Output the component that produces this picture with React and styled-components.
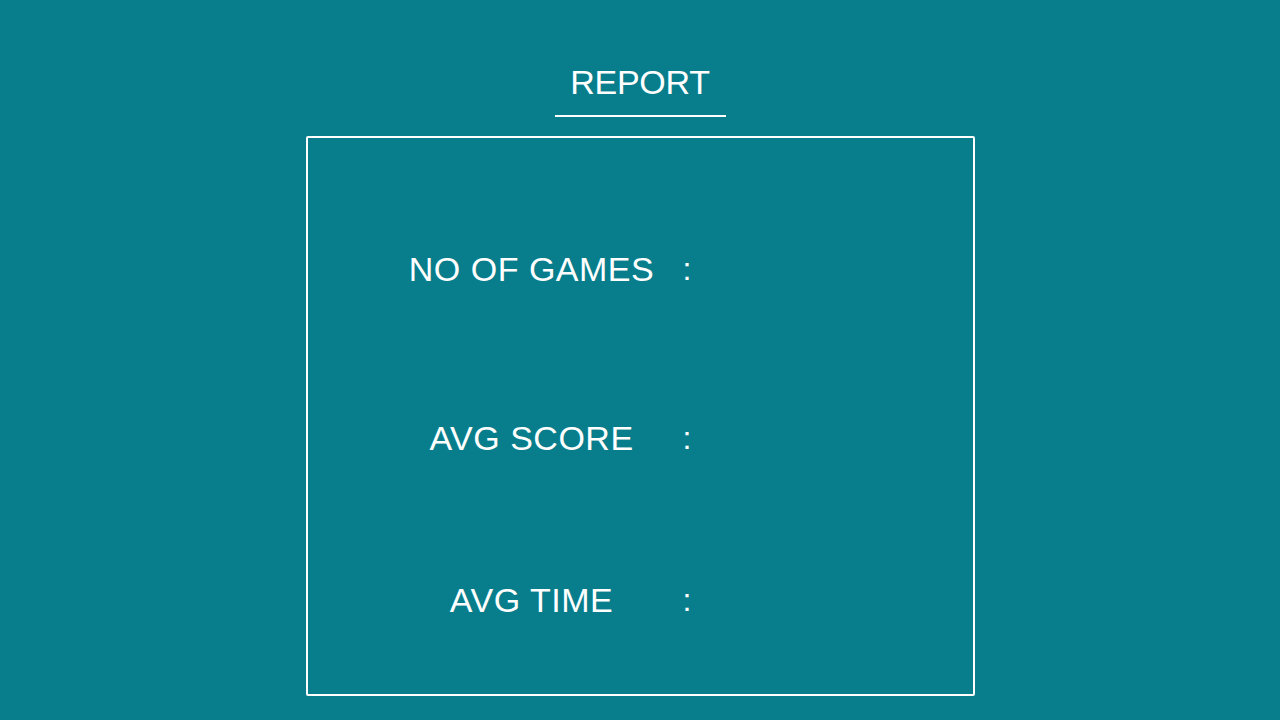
import React from "react";
import styled, { createGlobalStyle } from "styled-components";

const GlobalStyle = createGlobalStyle`
  html, body {
    margin: 0;
    padding: 0;
    background: #087e8c;
  }
  body {
    font-family: "Liberation Sans", Arial, sans-serif;
    color: #ffffff;
  }
`;

const Page = styled.div`
  min-height: 720px;
  padding-top: 62px;
  box-sizing: border-box;
  display: flex;
  flex-direction: column;
  align-items: center;
`;

const Title = styled.h1`
  margin: 0;
  width: 171px;
  padding-bottom: 13px;
  border-bottom: 2px solid #ffffff;
  font-size: 34px;
  font-weight: 400;
  line-height: 40px;
  letter-spacing: -0.3px;
  text-align: center;
`;

const ReportBox = styled.div`
  margin-top: 19px;
  width: 669px;
  height: 560px;
  box-sizing: border-box;
  border: 2px solid #ffffff;
  border-radius: 2px;
  padding: 111px 0 0 92px;
  display: flex;
  flex-direction: column;
`;

const Row = styled.div`
  display: flex;
  align-items: center;
  margin-top: ${(p) => p.$gap || 0}px;
  font-size: 34px;
  line-height: 40px;
`;

const Label = styled.div`
  width: 264px;
  text-align: center;
  letter-spacing: 0.5px;
`;

const Colon = styled.div`
  margin-left: 19px;
  font-size: 32px;
`;

const Value = styled.div`
  margin-left: 16px;
`;

const rows = [
  { label: "NO OF GAMES", gap: 0 },
  { label: "AVG SCORE", gap: 129 },
  { label: "AVG TIME", gap: 122 },
];

export default function App() {
  return (
    <>
      <GlobalStyle />
      <Page>
        <Title>REPORT</Title>
        <ReportBox>
          {rows.map((row) => (
            <Row key={row.label} $gap={row.gap}>
              <Label>{row.label}</Label>
              <Colon>:</Colon>
              <Value></Value>
            </Row>
          ))}
        </ReportBox>
      </Page>
    </>
  );
}
